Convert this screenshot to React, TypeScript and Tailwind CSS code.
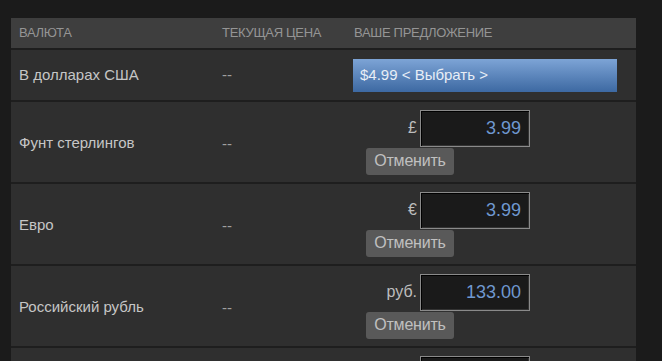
const rows = [
  { name: "Фунт стерлингов", symbol: "£", value: "3.99" },
  { name: "Евро", symbol: "€", value: "3.99" },
  { name: "Российский рубль", symbol: "руб.", value: "133.00" },
];

function OfferCell({ symbol, value, cancel = true }: { symbol: string; value: string; cancel?: boolean }) {
  return (
    <div className="flex flex-col items-start">
      <div className="flex w-[177px] items-center justify-end gap-[3px]">
        <span className="text-[16px] text-[#bdbdbd]">{symbol}</span>
        <div className="flex h-[37px] w-[110px] items-center justify-end border border-[#8a8a8a] bg-[#1a1a1a] pr-[8px] shadow-[inset_1px_1px_0_#000,inset_-1px_-1px_0_#333]">
          <span className="text-[18px] text-[#6f98d0]">{value}</span>
        </div>
      </div>
      {cancel && (
        <button
          type="button"
          className="ml-[13px] mt-px flex h-[27px] w-[88px] items-center justify-center rounded-[3px] bg-[#595959] text-[16px] tracking-[-0.2px] text-[#c0c0c0]"
        >
          Отменить
        </button>
      )}
    </div>
  );
}

export default function App() {
  return (
    <div
      className="h-[361px] w-[662px] overflow-hidden bg-[#1b1b1b] pl-[11px] pt-[18px]"
      style={{ fontFamily: '"Liberation Sans", Arial, sans-serif' }}
    >
      <div className="w-[625px] bg-[#2f2f2f]">
        <div className="flex h-[32px] items-center border-b-2 border-[#1e1e1e] bg-[#3e3e3e] text-[13px] uppercase tracking-[-0.3px] text-[#959595]">
          <div className="w-[211px] pl-[8px]">Валюта</div>
          <div className="w-[132px]">Текущая цена</div>
          <div>Ваше предложение</div>
        </div>

        <div className="flex h-[52px] items-center border-b-2 border-[#1e1e1e] text-[15px] text-[#c6c6c6]">
          <div className="w-[211px] pl-[8px]">В долларах США</div>
          <div className="w-[131px] text-[#a0a0a0]">--</div>
          <div className="flex h-[33px] w-[264px] items-center bg-gradient-to-b from-[#7da4d6] to-[#3d69a2] pl-[7px] text-[15px] text-[#e8eef6]">
            $4.99 &lt; Выбрать &gt;
          </div>
        </div>

        {rows.map((r) => (
          <div
            key={r.name}
            className="flex h-[82px] items-center border-b-2 border-[#1e1e1e] text-[15px] text-[#c6c6c6]"
          >
            <div className="w-[211px] pl-[8px] pt-[3px]">{r.name}</div>
            <div className="w-[131px] pt-[5px] text-[#a0a0a0]">--</div>
            <OfferCell symbol={r.symbol} value={r.value} />
          </div>
        ))}

        <div className="flex h-[82px] items-start border-b-2 border-[#1e1e1e] pt-[8px]">
          <div className="w-[342px]" />
          <OfferCell symbol="" value="" cancel={false} />
        </div>
      </div>
    </div>
  );
}
